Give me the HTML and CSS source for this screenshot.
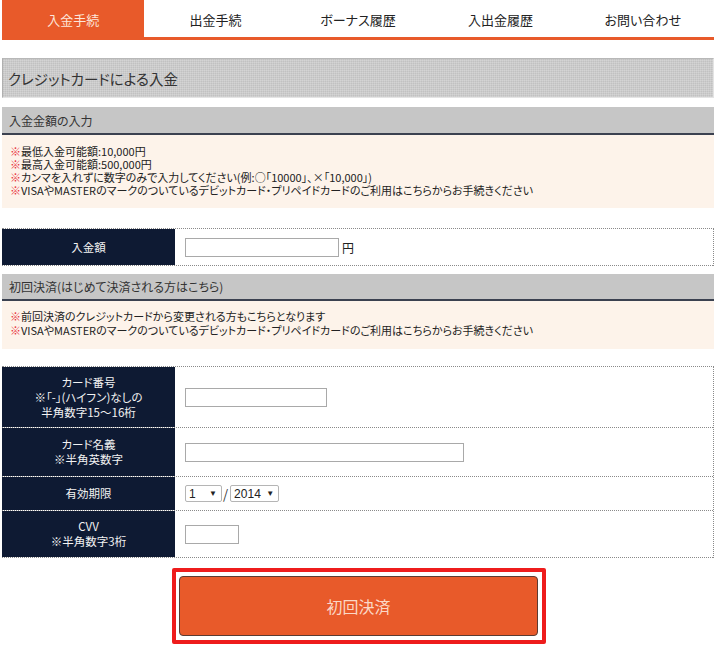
FILE: index.html
```html
<!DOCTYPE html>
<html lang="ja">
<head>
<meta charset="utf-8">
<title>クレジットカードによる入金</title>
<link rel="stylesheet" href="styles.css">
</head>
<body>
<div class="page">
  <nav class="tabs">
    <a class="tab active">入金手続</a>
    <a class="tab">出金手続</a>
    <a class="tab">ボーナス履歴</a>
    <a class="tab">入出金履歴</a>
    <a class="tab">お問い合わせ</a>
  </nav>

  <h1 class="title">クレジットカードによる入金</h1>

  <h2 class="sec">入金金額の入力</h2>
  <div class="notes">
    <p><span class="mark">※</span>最低入金可能額:10,000円</p>
    <p><span class="mark">※</span>最高入金可能額:500,000円</p>
    <p><span class="mark">※</span>カンマを入れずに数字のみで入力してください(例:○「10000」、×「10,000」)</p>
    <p><span class="mark">※</span>VISAやMASTERのマークのついているデビットカード・プリペイドカードのご利用はこちらからお手続きください</p>
  </div>

  <div class="form amount">
    <div class="row r-amount">
      <div class="lbl">入金額</div>
      <div class="val"><span class="inp w154"></span><span class="yen">円</span></div>
    </div>
  </div>

  <h2 class="sec sec2">初回決済(はじめて決済される方はこちら)</h2>
  <div class="notes notes2">
    <p><span class="mark">※</span>前回決済のクレジットカードから変更される方もこちらとなります</p>
    <p><span class="mark">※</span>VISAやMASTERのマークのついているデビットカード・プリペイドカードのご利用はこちらからお手続きください</p>
  </div>

  <div class="form card">
    <div class="row r-num">
      <div class="lbl">カード番号<br>※「-」(ハイフン)なしの<br>半角数字15～16桁</div>
      <div class="val"><span class="inp w142"></span></div>
    </div>
    <div class="row r-name">
      <div class="lbl">カード名義<br>※半角英数字</div>
      <div class="val"><span class="inp w279"></span></div>
    </div>
    <div class="row r-exp">
      <div class="lbl">有効期限</div>
      <div class="val">
        <span class="sel s-m">1<i class="arr">▼</i></span><span class="slash">/</span><span class="sel s-y">2014<i class="arr">▼</i></span>
      </div>
    </div>
    <div class="row r-cvv">
      <div class="lbl">CVV<br>※半角数字3桁</div>
      <div class="val"><span class="inp w54"></span></div>
    </div>
  </div>

  <div class="btnwrap">
    <div class="btnframe"><button class="btn">初回決済</button></div>
  </div>
</div>
</body>
</html>
```

FILE: styles.css
```css
* { box-sizing: border-box; }
html, body { margin: 0; padding: 0; background: #fff; }
body {
  font-family: "Noto Sans CJK JP", "Noto Sans", sans-serif;
  font-feature-settings: "palt";
  color: #333;
  font-size: 12px;
}
.page { padding: 0 2px; width: 716px; }

.tabs {
  display: grid;
  grid-template-columns: repeat(5, 1fr);
  height: 40px;
  border-bottom: 3px solid #e85a2a;
}
.tab {
  display: flex;
  align-items: center;
  justify-content: center;
  font-size: 13px;
  color: #222;
  height: 37px;
  padding-top: 1px;
}
.tab.active { background: #e85a2a; color: #fde6da; }

.title {
  margin: 18px 0 0;
  height: 40px;
  display: flex;
  align-items: center;
  padding-left: 5px;
  font-size: 14.5px;
  font-weight: normal;
  color: #333;
  background-color: #cbcbcb;
  background-image:
    repeating-linear-gradient(0deg, rgba(255,255,255,0.18) 0 1px, transparent 1px 2px),
    repeating-linear-gradient(90deg, rgba(0,0,0,0.05) 0 1px, transparent 1px 2px);
  border-top: 1px solid #b8b8b8;
  border-left: 1px solid #b0b0b0;
  border-right: 1px solid #e4e4e4;
  border-bottom: 1px solid #e4e4e4;
}

.sec {
  margin: 9px 0 0;
  height: 28px;
  display: flex;
  align-items: center;
  padding-left: 7px;
  font-size: 12px;
  font-weight: normal;
  color: #333;
  background: #c6c6c6;
  border-bottom: 2px solid #3b4150;
}
.sec2 { margin-top: 8px; height: 27px; }

.notes {
  background: #fdf3ea;
  padding: 10px 8px 11px;
  font-size: 11px;
  line-height: 13px;
  color: #222;
}
.notes p { margin: 0; white-space: nowrap; }
.notes2 { padding: 8px 8px 12px; line-height: 14px; }
.mark { color: #e8343c; }

.form {
  border-top: 1px dotted #8a8a8a;
  border-right: 1px dotted #8a8a8a;
}
.amount { margin-top: 20px; }
.card { margin-top: 17px; }

.row {
  display: grid;
  grid-template-columns: 173px 1fr;
  border-bottom: 1px dotted #8a8a8a;
}
.lbl {
  background: #0e1a33;
  color: #f2f2f2;
  font-size: 11.5px;
  line-height: 15px;
  display: flex;
  align-items: center;
  justify-content: center;
  text-align: center;
}
.val {
  display: flex;
  align-items: center;
  padding-left: 10px;
}
.r-amount { height: 37px; }
.r-num { height: 61px; }
.r-name { height: 49px; }
.r-exp { height: 34px; }
.r-cvv { height: 47px; }

.inp {
  display: inline-block;
  height: 19px;
  border: 1px solid #a9a9a9;
  background: #fff;
}
.w154 { width: 154px; }
.w142 { width: 142px; }
.w279 { width: 279px; }
.w54 { width: 54px; }
.yen { margin-left: 3px; font-size: 12px; color: #222; }

.sel {
  display: inline-flex;
  align-items: center;
  justify-content: space-between;
  height: 17px;
  border: 1px solid #b5b5b5;
  border-radius: 2px;
  background: #fff;
  font-family: "Liberation Sans", Arial, sans-serif;
  font-size: 12px;
  color: #222;
  padding: 0 4px 0 3px;
}
.s-m { width: 37px; }
.s-y { width: 49px; }
.arr { font-style: normal; font-size: 8px; }
.slash { margin: 0 2px 0 1px; font-size: 13px; color: #333; }

.btnwrap {
  display: flex;
  justify-content: center;
  margin-top: 10px;
  padding-left: 2px;
}
.btnframe {
  border: 4px solid #ee1c1c;
  padding: 4px 4px 4px 3px;
  width: 374px;
  height: 76px;
  border-radius: 2px;
}
.btn {
  width: 100%;
  height: 100%;
  background: #e85a2a;
  border: 1px solid #5a3b32;
  border-radius: 4px;
  color: #fbd8c6;
  font-family: "Noto Sans CJK JP", sans-serif;
  font-size: 16px;
}
```
